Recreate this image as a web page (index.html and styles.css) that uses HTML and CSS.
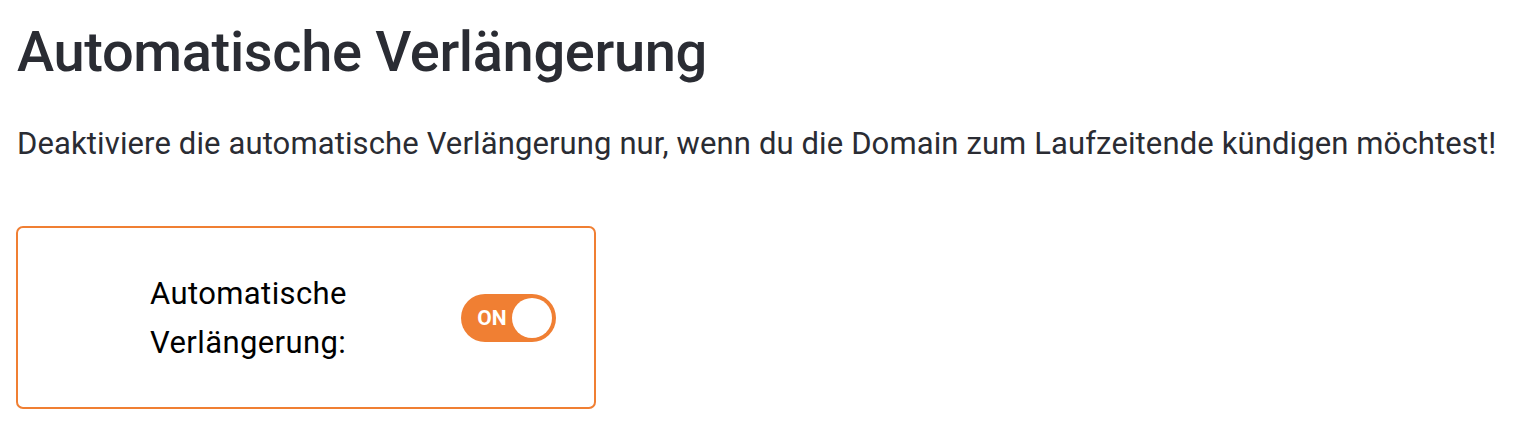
FILE: index.html
```html
<!DOCTYPE html>
<html lang="de">
<head>
    <meta charset="UTF-8">
    <meta name="viewport" content="width=device-width, initial-scale=1.0">
    <title>Automatische Verlängerung</title>
    <link rel="stylesheet" href="styles.css">
</head>
<body>
    <div class="page">
        <h1>Automatische Verlängerung</h1>
        <p class="hint">Deaktiviere die automatische Verlängerung nur, wenn du die Domain zum Laufzeitende kündigen möchtest!</p>
        <div class="renew-box">
            <label class="renew-label" for="renewToggle">Automatische<br>Verlängerung:</label>
            <label class="switch">
                <input type="checkbox" id="renewToggle" checked>
                <span class="switch-track">
                    <span class="switch-text">ON</span>
                    <span class="switch-knob"></span>
                </span>
            </label>
        </div>
    </div>
</body>
</html>
```

FILE: styles.css
```css
body {
    margin: 0;
    font-family: Roboto, "Liberation Sans", Arial, sans-serif;
    background-color: #ffffff;
    color: #2a2c33;
}
.page {
    padding: 17px 17px;
}
h1 {
    margin: 0;
    font-size: 56px;
    font-weight: 500;
    line-height: 70px;
    letter-spacing: -0.35px;
}
.hint {
    margin: 37px 0 0;
    font-size: 31px;
    line-height: 40px;
    letter-spacing: 0.12px;
}
.renew-box {
    margin-top: 62px;
    margin-left: -1px;
    width: 580px;
    height: 183px;
    box-sizing: border-box;
    border: 2px solid #f07f33;
    border-radius: 7px;
    display: flex;
    align-items: center;
    padding-left: 132px;
    gap: 114px;
}
.renew-label {
    font-size: 31px;
    line-height: 49px;
    letter-spacing: 0.4px;
    color: #000000;
}
.switch input {
    display: none;
}
.switch-track {
    display: flex;
    align-items: center;
    width: 95px;
    height: 48px;
    box-sizing: border-box;
    border-radius: 24px;
    background-color: #f07f33;
    padding: 4px;
}
.switch-text {
    flex: 1;
    text-align: center;
    color: #ffffff;
    font-weight: 700;
    font-size: 21px;
    padding-left: 7px;
}
.switch-knob {
    width: 40px;
    height: 40px;
    border-radius: 50%;
    background-color: #ffffff;
}
```
